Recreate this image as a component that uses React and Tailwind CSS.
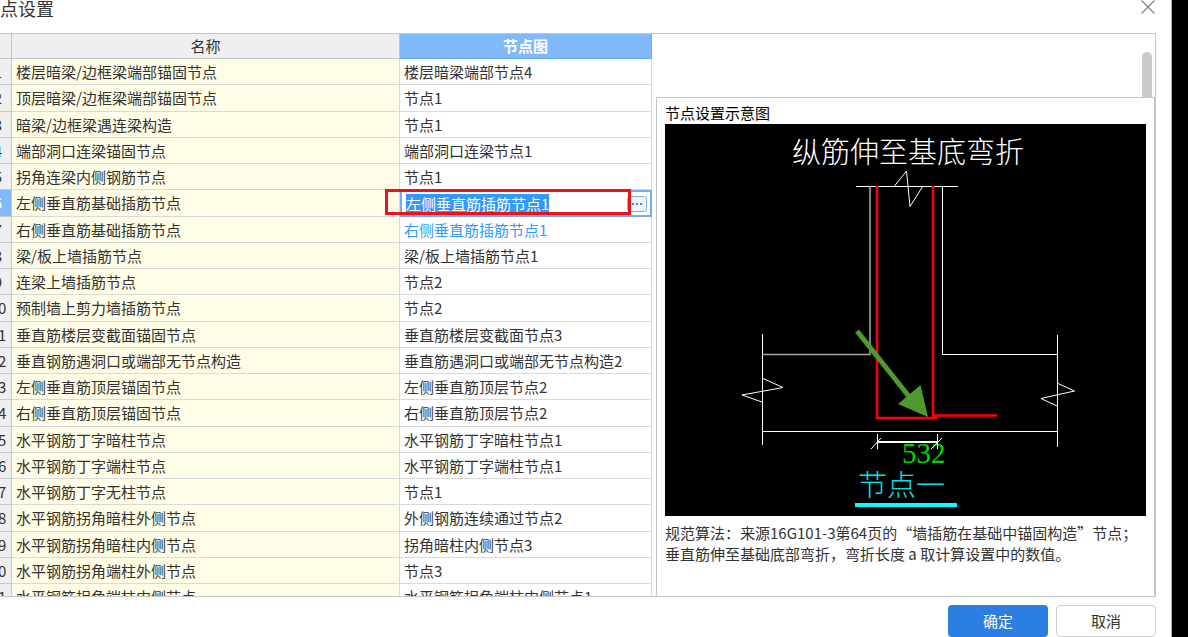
import React, { useState } from "react";

const ROWS = [
  ["楼层暗梁/边框梁端部锚固节点", "楼层暗梁端部节点4"],
  ["顶层暗梁/边框梁端部锚固节点", "节点1"],
  ["暗梁/边框梁遇连梁构造", "节点1"],
  ["端部洞口连梁锚固节点", "端部洞口连梁节点1"],
  ["拐角连梁内侧钢筋节点", "节点1"],
  ["左侧垂直筋基础插筋节点", "左侧垂直筋插筋节点1"],
  ["右侧垂直筋基础插筋节点", "右侧垂直筋插筋节点1"],
  ["梁/板上墙插筋节点", "梁/板上墙插筋节点1"],
  ["连梁上墙插筋节点", "节点2"],
  ["预制墙上剪力墙插筋节点", "节点2"],
  ["垂直筋楼层变截面锚固节点", "垂直筋楼层变截面节点3"],
  ["垂直钢筋遇洞口或端部无节点构造", "垂直筋遇洞口或端部无节点构造2"],
  ["左侧垂直筋顶层锚固节点", "左侧垂直筋顶层节点2"],
  ["右侧垂直筋顶层锚固节点", "右侧垂直筋顶层节点2"],
  ["水平钢筋丁字暗柱节点", "水平钢筋丁字暗柱节点1"],
  ["水平钢筋丁字端柱节点", "水平钢筋丁字端柱节点1"],
  ["水平钢筋丁字无柱节点", "节点1"],
  ["水平钢筋拐角暗柱外侧节点", "外侧钢筋连续通过节点2"],
  ["水平钢筋拐角暗柱内侧节点", "拐角暗柱内侧节点3"],
  ["水平钢筋拐角端柱外侧节点", "节点3"],
  ["水平钢筋拐角端柱内侧节点", "水平钢筋拐角端柱内侧节点1"],
];

const ACTIVE = 5;
const CHANGED = 6;

const EditCell = ({ value, label }) => {
  const [text, setText] = useState(value);
  return (
    <td className="relative border-2 border-[#74adee] p-0">
      <div className="flex items-center justify-between pl-1 pr-[3px]">
        <input
          aria-label={label}
          value={text}
          onChange={(e) => setText(e.target.value)}
          className="field-sizing-content h-5 bg-[#3399ff] text-white outline-none"
        />
        <button
          type="button"
          aria-label="选择节点图"
          className="flex h-4 w-5 items-center justify-center gap-0.5 rounded-[3px] border border-[#7fb2ea] bg-[#edf4fd]"
        >
          <span className="size-0.5 bg-[#3f8ae0]" />
          <span className="size-0.5 bg-[#3f8ae0]" />
          <span className="size-0.5 bg-[#3f8ae0]" />
        </button>
      </div>
      <div className="pointer-events-none absolute -left-[17px] -top-[3px] h-[26px] w-[246px] border-3 border-[#ea121c]" />
    </td>
  );
};

const NodeTable = () => {
  return (
    <table className="-ml-[15px] w-[667px] shrink-0 table-fixed border-separate border-spacing-0 self-start whitespace-nowrap">
      <colgroup>
        <col className="w-[27px]" />
        <col className="w-[388px]" />
        <col className="w-[252px]" />
      </colgroup>
      <thead>
        <tr className="h-[25px]">
          <td className="border-b border-r border-[#c6c6c6] bg-[#efefef] p-0" />
          <th className="border-b border-r border-[#c6c6c6] bg-[#efefef] p-0 font-normal">
            名称
          </th>
          <th className="border-b border-r border-[#6aabf0] bg-[#80bafa] p-0 font-bold text-white">
            节点图
          </th>
        </tr>
      </thead>
      <tbody className="[&>tr]:h-[26px] [&>tr:nth-child(4n+2)]:h-[27px]">
        {ROWS.map(([name, node], i) => (
          <tr key={name}>
            <th
              className={`border-b border-r border-[#c9c9c9] p-0 font-normal ${
                i === ACTIVE ? "bg-[#80bafa] text-white" : "bg-[#efefef]"
              }`}
            >
              {i + 1}
            </th>
            <td className="border-b border-r border-[#d9d9d9] bg-[#fffde6] py-0 pl-1 pr-0">
              {name}
            </td>
            {i === ACTIVE ? (
              <EditCell value={node} label={name} />
            ) : (
              <td
                className={`border-b border-r border-[#d9d9d9] py-0 pl-1 pr-0 ${
                  i === CHANGED ? "text-[#3399ff]" : ""
                }`}
              >
                {node}
              </td>
            )}
          </tr>
        ))}
      </tbody>
    </table>
  );
};

const NodeDiagram = () => {
  return (
    <svg viewBox="0 0 481 392" className="block h-auto w-full bg-black">
      <g fontSize="29" fontFamily="'Liberation Serif', 'Noto Sans CJK SC', serif">
        <text x="127" y="39" fill="#fff" fontWeight="300">
          纵筋伸至基底弯折
        </text>
        <text x="237" y="339" fill="#00d800">
          532
        </text>
        <text x="193" y="372" fill="#00e5e5" fontWeight="300">
          节点一
        </text>
      </g>
      <g fill="none" stroke="#fff" strokeWidth="1">
        <path d="M191 62.500H293" />
        <path d="M229.500 62L241.500 47L245 82.500L258 62" />
        <path d="M97.500 210V321M392.500 211V323M97 307.500H392" />
        <path d="M277.500 62V230.500H392" />
        <path d="M97 254L118 263.500L77 271L97 278" />
        <path d="M392 259L409.500 267L376 274.500L392 282" />
        <path d="M212.500 310V325M272.500 310V325" />
        <path d="M206 325L216 314M266 325L277 314" />
        <path d="M212 318H272" strokeWidth="2" />
      </g>
      <path d="M205 62V230.500H97" fill="none" stroke="#a8a8a8" strokeWidth="1.500" />
      <path
        d="M212 62V294H272M268 62V291.500H332"
        fill="none"
        stroke="#f00"
        strokeWidth="2.500"
      />
      <path d="M190 381H292" stroke="#0ff" strokeWidth="4" />
      <path d="M192 207L246 275" stroke="#4e9a2e" strokeWidth="5" />
      <path d="M255.500 261L263 293L233 280Z" fill="#4e9a2e" />
    </svg>
  );
};

const SidePanel = () => {
  return (
    <div className="ml-1 flex min-w-0 flex-1 flex-col">
      <div className="flex h-[63px] shrink-0 justify-end pr-[3px] pt-[18px]">
        <div className="w-2.5 rounded-t-full bg-[#cbcbcb]" />
      </div>
      <section className="flex-1 border-x border-t border-[#c6c6c6] px-2 pt-1">
        <h2 className="leading-[22px] text-black">节点设置示意图</h2>
        <NodeDiagram />
        <p className="whitespace-pre-line pt-1.5 leading-[21px]">
          {
            "规范算法：来源16G101-3第64页的“墙插筋在基础中锚固构造”节点；\n垂直筋伸至基础底部弯折，弯折长度 a 取计算设置中的数值。"
          }
        </p>
      </section>
    </div>
  );
};

const App = () => {
  return (
    <div
      lang="zh-CN"
      className="flex h-screen overflow-hidden bg-black font-['Noto_Sans_CJK_SC',sans-serif] text-[15px] leading-5 text-[#333]"
    >
      <div className="flex min-w-0 flex-1 flex-col border-r border-[#b5b5b5] bg-white pr-[15px]">
        <header className="flex h-[33px] shrink-0 items-start justify-between">
          <h1 className="-ml-[18px] text-lg leading-4">节点设置</h1>
          <button type="button" aria-label="关闭" className="pr-px">
            <svg viewBox="0 0 14 14" className="size-3.5">
              <path
                d="M0.500 0.500L13.500 13.500M13.500 0.500L0.500 13.500"
                stroke="#808080"
                strokeWidth="1.200"
              />
            </svg>
          </button>
        </header>
        <main className="flex min-h-0 flex-1 overflow-hidden border-y border-r border-[#c6c6c6]">
          <NodeTable />
          <SidePanel />
        </main>
        <footer className="flex h-10 shrink-0 justify-end gap-2 pt-2">
          <button
            type="button"
            className="h-8 w-[100px] rounded bg-[#2b7fe3] text-white"
          >
            确定
          </button>
          <button
            type="button"
            className="h-8 w-[100px] rounded border border-[#cfcfcf] bg-white"
          >
            取消
          </button>
        </footer>
      </div>
      <div className="w-4 shrink-0" />
    </div>
  );
};

export default App;
